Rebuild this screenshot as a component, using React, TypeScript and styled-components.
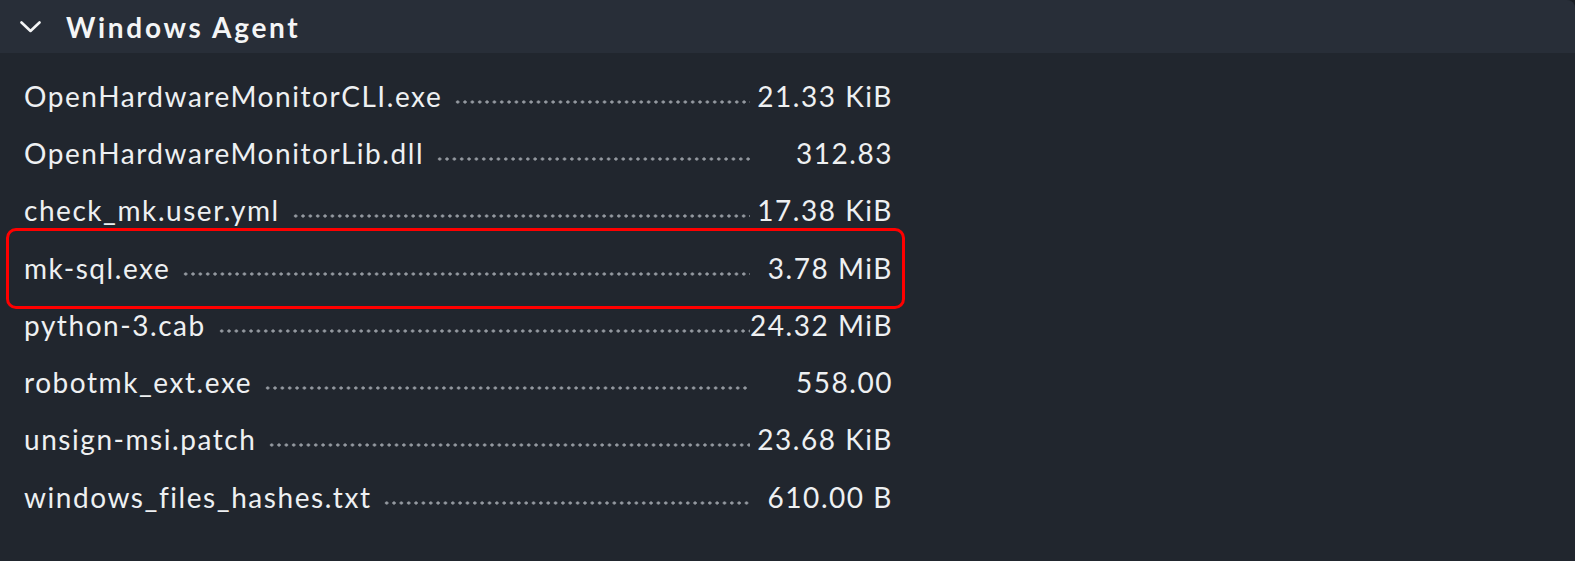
import styled, { createGlobalStyle } from 'styled-components';

const GlobalStyle = createGlobalStyle`
	html, body {
		margin: 0;
		padding: 0;
		background: #1b1f25;
	}
	body {
		font-family: Lato, "Noto Sans", sans-serif;
		color: #eef0f2;
	}
`;

const Panel = styled.section`
	width: 1575px;
	height: 561px;
	background: #21262e;
	border-top-right-radius: 8px;
	overflow: hidden;
	display: flex;
	flex-direction: column;
`;

const Header = styled.header`
	height: 53px;
	flex: none;
	background: #282e38;
	display: flex;
	align-items: center;
	padding-left: 20px;
	gap: 25px;
`;

const Title = styled.h2`
	margin: 0;
	font-size: 28px;
	font-weight: 700;
	letter-spacing: 2.7px;
	color: #f4f5f6;
`;

const FileList = styled.div`
	padding: 14px 0 0 24px;
	display: flex;
	flex-direction: column;
`;

const Row = styled.div<{ $marked?: boolean }>`
	position: relative;
	width: 869px;
	height: 57.3px;
	display: grid;
	grid-template-columns: 726px 143px;
	align-items: center;
	font-size: 28px;
	letter-spacing: 1.55px;

	${({ $marked }) =>
		$marked &&
		`
		&::after {
			content: '';
			position: absolute;
			left: -18px;
			right: -12px;
			top: -11px;
			bottom: -13px;
			border: 3.5px solid #ff0000;
			border-radius: 10px;
			pointer-events: none;
		}
	`}
`;

const NameCell = styled.div`
	display: flex;
	align-items: baseline;
	min-width: 0;
`;

const Name = styled.span`
	white-space: nowrap;
	flex: none;
`;

const Leader = styled.span`
	flex: 1;
	height: 4px;
	margin-left: 12px;
	align-self: center;
	transform: translateY(6px);
	background-image: radial-gradient(circle, #959aa1 1.35px, transparent 1.85px);
	background-size: 7.35px 4px;
	background-repeat: repeat-x;
	background-position: left center;
`;

const Size = styled.span`
	text-align: right;
	white-space: nowrap;
`;

const Chevron = () => (
	<svg width="21" height="12" viewBox="0 0 21 12" fill="none">
		<path d="M1.5 1.5 L10.5 10 L19.5 1.5" stroke="#f4f5f6" strokeWidth="2.6" strokeLinecap="round" strokeLinejoin="round" />
	</svg>
);

const files = [
	{ name: 'OpenHardwareMonitorCLI.exe', size: '21.33 KiB' },
	{ name: 'OpenHardwareMonitorLib.dll', size: '312.83' },
	{ name: 'check_mk.user.yml', size: '17.38 KiB' },
	{ name: 'mk-sql.exe', size: '3.78 MiB', marked: true },
	{ name: 'python-3.cab', size: '24.32 MiB' },
	{ name: 'robotmk_ext.exe', size: '558.00' },
	{ name: 'unsign-msi.patch', size: '23.68 KiB' },
	{ name: 'windows_files_hashes.txt', size: '610.00 B' },
];

export default function App() {
	return (
		<>
			<GlobalStyle />
			<Panel>
				<Header>
					<Chevron />
					<Title>Windows Agent</Title>
				</Header>
				<FileList>
					{files.map((f) => (
						<Row key={f.name} $marked={f.marked}>
							<NameCell>
								<Name>{f.name}</Name>
								<Leader />
							</NameCell>
							<Size>{f.size}</Size>
						</Row>
					))}
				</FileList>
			</Panel>
		</>
	);
}
